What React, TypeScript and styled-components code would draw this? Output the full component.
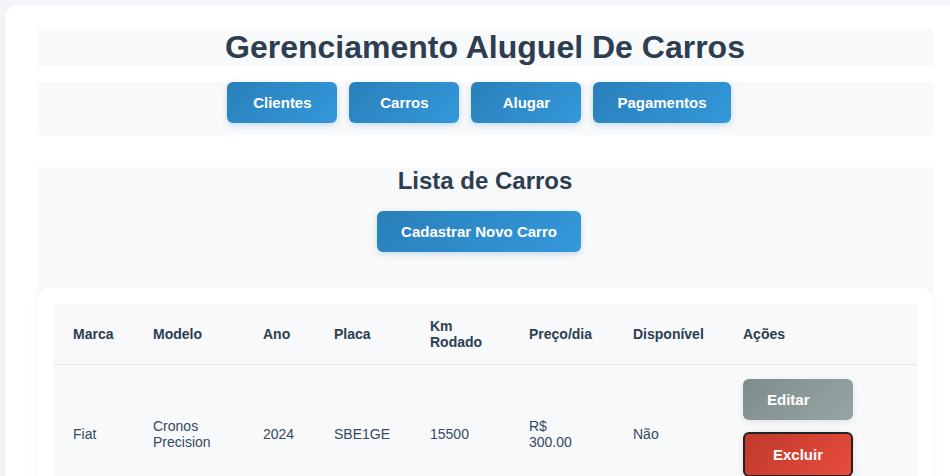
import React from "react";
import styled, { createGlobalStyle, css } from "styled-components";

const GlobalStyle = createGlobalStyle`
  html, body {
    margin: 0;
    padding: 0;
    overflow: hidden;
    background: #f3f5f8;
    font-family: "Liberation Sans", Arial, sans-serif;
  }
  body {
    padding: 5px;
  }
  * { box-sizing: border-box; }
`;

const Container = styled.div`
  width: 960px;
  background: #ffffff;
  border-radius: 12px;
  padding: 24px 32px 32px;
  box-shadow: 0 2px 12px rgba(0, 0, 0, 0.04);
`;

const Header = styled.header`
  background: #f8f9fb;
  margin-bottom: 16px;
`;

const Title = styled.h1`
  margin: 0;
  font-size: 32px;
  line-height: 37px;
  font-weight: 700;
  color: #2c3e50;
  text-align: center;
`;

const Nav = styled.nav`
  display: flex;
  flex-wrap: wrap;
  justify-content: center;
  background: #f8f9fb;
  margin-bottom: 32px;
`;

type Variant = "primary" | "secondary" | "danger";

const variants = {
  primary: css`
    background: linear-gradient(135deg, #2980b9, #3498db);
    box-shadow: 0 2px 6px rgba(41, 128, 185, 0.25);
    border: none;
  `,
  secondary: css`
    background: linear-gradient(135deg, #7f8c8d, #95a5a6);
    box-shadow: 0 2px 6px rgba(127, 140, 141, 0.2);
    border: none;
    text-align: left;
  `,
  danger: css`
    background: linear-gradient(135deg, #c0392b, #e74c3c);
    box-shadow: 0 2px 6px rgba(192, 57, 43, 0.2);
    border: 2px solid #222222;
    padding: 12px 22px;
  `,
};

const Button = styled.button<{ $variant?: Variant }>`
  display: block;
  min-width: 110px;
  height: 41px;
  padding: 12px 24px;
  margin: 0 12px 12px 0;
  border-radius: 6px;
  color: #ffffff;
  font-family: "Liberation Sans", Arial, sans-serif;
  font-size: 15px;
  line-height: 17px;
  font-weight: 700;
  text-align: center;
  cursor: pointer;
  ${({ $variant = "primary" }) => variants[$variant]}
  ${({ $variant }) =>
    $variant === "danger" &&
    css`
      height: 45px;
      margin: 0;
    `}
`;

const Section = styled.section`
  background: #f8f9fb;
`;

const SectionTitle = styled.h2`
  margin: 0 0 16px;
  font-size: 24px;
  line-height: 28px;
  font-weight: 700;
  color: #2c3e50;
  text-align: center;
`;

const ButtonRow = styled.div`
  display: flex;
  justify-content: center;
  margin-bottom: 24px;
`;

const Card = styled.div`
  background: #ffffff;
  border-radius: 12px;
  padding: 16px;
  box-shadow: 0 2px 10px rgba(52, 152, 219, 0.08);
`;

const Table = styled.table`
  width: 100%;
  table-layout: fixed;
  border-collapse: collapse;
  background: #f8f9fb;
  font-size: 14px;
  line-height: 16px;
`;

const Th = styled.th<{ $nowrap?: boolean }>`
  padding: 14px 20px;
  text-align: left;
  font-weight: 700;
  color: #2c3e50;
  border-bottom: 1px solid #e6eaee;
  white-space: ${({ $nowrap }) => ($nowrap ? "nowrap" : "normal")};
`;

const Td = styled.td<{ $actions?: boolean }>`
  padding: 15px 20px;
  color: #34495e;
  vertical-align: middle;
  ${({ $actions }) =>
    $actions &&
    css`
      padding: 14px 20px 25px;
    `}
`;

const Actions = styled.div`
  display: flex;
  flex-direction: column;
  align-items: flex-start;
`;

const columns = [
  { label: "Marca", width: 80 },
  { label: "Modelo", width: 110 },
  { label: "Ano", width: 71 },
  { label: "Placa", width: 96 },
  { label: "Km Rodado", width: 99 },
  { label: "Preço/dia", width: 104, nowrap: true },
  { label: "Disponível", width: 110, nowrap: true },
  { label: "Ações", width: 194 },
];

const cars = [
  {
    marca: "Fiat",
    modelo: "Cronos Precision",
    ano: 2024,
    placa: "SBE1GE",
    km: 15500,
    preco: "R$ 300.00",
    disponivel: "Não",
  },
];

export default function App() {
  return (
    <>
      <GlobalStyle />
      <Container>
        <Header>
          <Title>Gerenciamento Aluguel De Carros</Title>
        </Header>
        <Nav>
          <Button>Clientes</Button>
          <Button>Carros</Button>
          <Button>Alugar</Button>
          <Button>Pagamentos</Button>
        </Nav>
        <Section>
          <SectionTitle>Lista de Carros</SectionTitle>
          <ButtonRow>
            <Button>Cadastrar Novo Carro</Button>
          </ButtonRow>
          <Card>
            <Table>
              <colgroup>
                {columns.map((c) => (
                  <col key={c.label} style={{ width: c.width }} />
                ))}
              </colgroup>
              <thead>
                <tr>
                  {columns.map((c) => (
                    <Th key={c.label} $nowrap={c.nowrap}>
                      {c.label}
                    </Th>
                  ))}
                </tr>
              </thead>
              <tbody>
                {cars.map((car) => (
                  <tr key={car.placa}>
                    <Td>{car.marca}</Td>
                    <Td>{car.modelo}</Td>
                    <Td>{car.ano}</Td>
                    <Td>{car.placa}</Td>
                    <Td>{car.km}</Td>
                    <Td>{car.preco}</Td>
                    <Td>{car.disponivel}</Td>
                    <Td $actions>
                      <Actions>
                        <Button $variant="secondary">Editar</Button>
                        <Button $variant="danger">Excluir</Button>
                      </Actions>
                    </Td>
                  </tr>
                ))}
              </tbody>
            </Table>
          </Card>
        </Section>
      </Container>
    </>
  );
}
